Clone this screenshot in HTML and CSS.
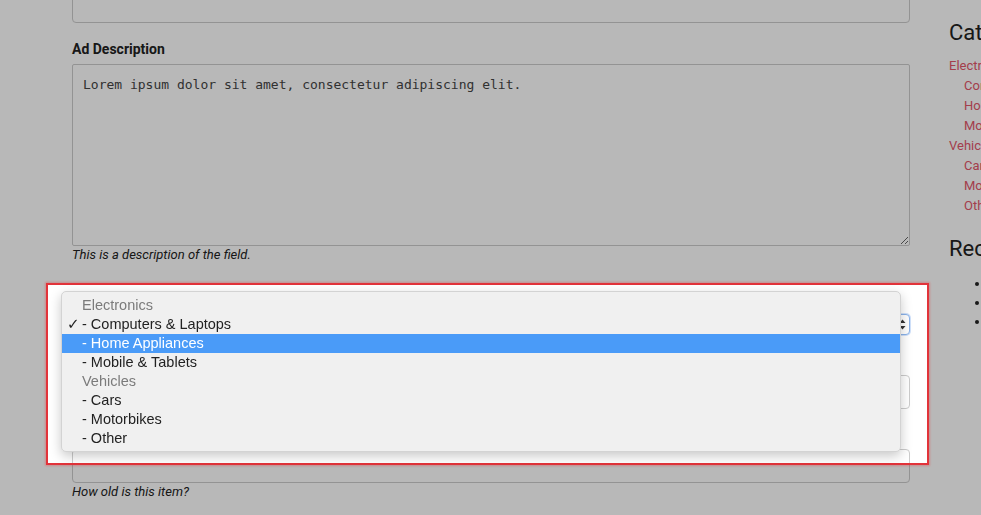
FILE: index.html
```html
<!DOCTYPE html>
<html lang="en">
<head>
<meta charset="utf-8">
<title>Post an Ad</title>
<link rel="stylesheet" href="styles.css">
</head>
<body>
<div class="page">
  <main class="main">
    <div class="field field-first">
      <input class="input" type="text" value="">
    </div>
    <div class="field">
      <label class="label">Ad Description</label>
      <textarea class="textarea">Lorem ipsum dolor sit amet, consectetur adipiscing elit.</textarea>
      <p class="help">This is a description of the field.</p>
    </div>
    <div class="field field-select">
      <label class="label">Category</label>
      <div class="select">
        <span class="select-value">- Computers &amp; Laptops</span>
        <svg class="select-arrow" width="7" height="11" viewBox="0 0 7 11"><path d="M3.5 0.5 L6.5 4 H0.5 Z M3.5 10.5 L6.5 7 H0.5 Z" fill="#333"/></svg>
      </div>
    </div>
    <div class="field field-tight">
      <label class="label">Price</label>
      <input class="input" type="text" value="">
    </div>
    <div class="field field-tight">
      <label class="label">Age</label>
      <input class="input" type="text" value="">
      <p class="help">How old is this item?</p>
    </div>
  </main>
  <aside class="sidebar">
    <h2 class="side-title">Categories</h2>
    <ul class="cats">
      <li><a class="cat-link" href="#">Electronics</a>
        <ul class="subcats">
          <li><a class="cat-link" href="#">Computers &amp; Laptops</a></li>
          <li><a class="cat-link" href="#">Home Appliances</a></li>
          <li><a class="cat-link" href="#">Mobile &amp; Tablets</a></li>
        </ul>
      </li>
      <li><a class="cat-link" href="#">Vehicles</a>
        <ul class="subcats">
          <li><a class="cat-link" href="#">Cars</a></li>
          <li><a class="cat-link" href="#">Motorbikes</a></li>
          <li><a class="cat-link" href="#">Other</a></li>
        </ul>
      </li>
    </ul>
    <h2 class="side-title side-title-recent">Recent Ads</h2>
    <ul class="recent">
      <li>Lorem ipsum</li>
      <li>Dolor sit amet</li>
      <li>Consectetur</li>
    </ul>
  </aside>
</div>

<div class="spotlight"></div>

<div class="dropdown">
  <div class="opt opt-group">Electronics</div>
  <div class="opt opt-checked"><span class="check">✓</span>- Computers &amp; Laptops</div>
  <div class="opt opt-active">- Home Appliances</div>
  <div class="opt">- Mobile &amp; Tablets</div>
  <div class="opt opt-group">Vehicles</div>
  <div class="opt">- Cars</div>
  <div class="opt">- Motorbikes</div>
  <div class="opt">- Other</div>
</div>
</body>
</html>
```

FILE: styles.css
```css
html, body {
  margin: 0;
  padding: 0;
  background: #ffffff;
  overflow: hidden;
  height: 515px;
}

body {
  font-family: Roboto, "Liberation Sans", sans-serif;
  color: #222;
}

.page {
  display: flex;
  gap: 39px;
  padding-left: 72px;
  width: 1400px;
}

.main {
  width: 838px;
  flex: none;
  margin-top: -11px;
}

.field {
  display: flex;
  flex-direction: column;
  margin-top: 16px;
}

.field-first {
  margin-top: 0;
}

.field-select {
  margin-top: 26px;
}

.field-tight {
  margin-top: 15px;
}

.label {
  font-size: 14px;
  font-weight: 700;
  line-height: 20px;
  margin-bottom: 5px;
  color: #222;
}

.input {
  box-sizing: border-box;
  height: 34px;
  width: 100%;
  border: 1px solid #cccccc;
  border-radius: 4px;
  background: #fff;
  margin: 0;
  padding: 6px 10px;
  font: 14px Roboto, sans-serif;
}

.textarea {
  box-sizing: border-box;
  height: 182px;
  width: 100%;
  border: 1px solid #cccccc;
  border-radius: 2px;
  background: #fff;
  margin: 0;
  padding: 11px 10px;
  font: 13px/18px "DejaVu Sans Mono", monospace;
  color: #444;
  resize: both;
}

.help {
  margin: 0;
  font-size: 13px;
  line-height: 17px;
  font-style: italic;
  color: #222;
}

.select {
  box-sizing: border-box;
  position: relative;
  height: 21px;
  width: 100%;
  border: 1px solid #8bb3ea;
  border-radius: 4px;
  box-shadow: 0 0 0 1px rgba(120, 170, 240, 0.35);
  background: #fff;
  font: 13px "Liberation Sans", sans-serif;
  line-height: 19px;
  padding-left: 8px;
}

.select-arrow {
  position: absolute;
  right: 3px;
  top: 4px;
}

.sidebar {
  width: 300px;
  flex: none;
  padding-top: 20px;
}

.side-title {
  margin: 0 0 10px;
  font-size: 22px;
  font-weight: 400;
  line-height: 26px;
  color: #222;
}

.side-title-recent {
  margin-top: 20px;
  margin-bottom: 12px;
}

.cats, .subcats {
  list-style: none;
  margin: 0;
  padding: 0;
}

.subcats {
  padding-left: 15px;
}

.cats li {
  font-size: 13px;
  line-height: 20px;
}

.cat-link {
  color: #e3566a;
  text-decoration: none;
}

.recent {
  margin: 0;
  padding-left: 41px;
  font-size: 13px;
  line-height: 19px;
}

.spotlight {
  position: fixed;
  left: 46px;
  top: 283px;
  width: 883px;
  height: 182px;
  box-sizing: border-box;
  border: 2px solid #e2333a;
  box-shadow: 0 0 2px 1px rgba(229, 57, 61, 0.35), 0 0 0 3000px rgba(0, 0, 0, 0.278);
  z-index: 10;
  pointer-events: none;
}

.dropdown {
  position: fixed;
  left: 61px;
  top: 291px;
  width: 840px;
  height: 161px;
  box-sizing: border-box;
  padding-top: 4px;
  background: #f0f0f0;
  border: 1px solid #d3d3d3;
  border-radius: 5px;
  box-shadow: 0 4px 12px rgba(0, 0, 0, 0.22);
  z-index: 20;
  font-family: "Liberation Sans", Arial, sans-serif;
  font-size: 14.5px;
}

.opt {
  position: relative;
  height: 19px;
  line-height: 19px;
  padding-left: 20px;
  color: #222;
}

.opt-group {
  color: #7b7b7b;
}

.opt-active {
  background: #4a9bf8;
  color: #fff;
}

.check {
  position: absolute;
  left: 5px;
  top: 0;
  font-size: 15px;
  font-family: "DejaVu Sans", sans-serif;
}
```
